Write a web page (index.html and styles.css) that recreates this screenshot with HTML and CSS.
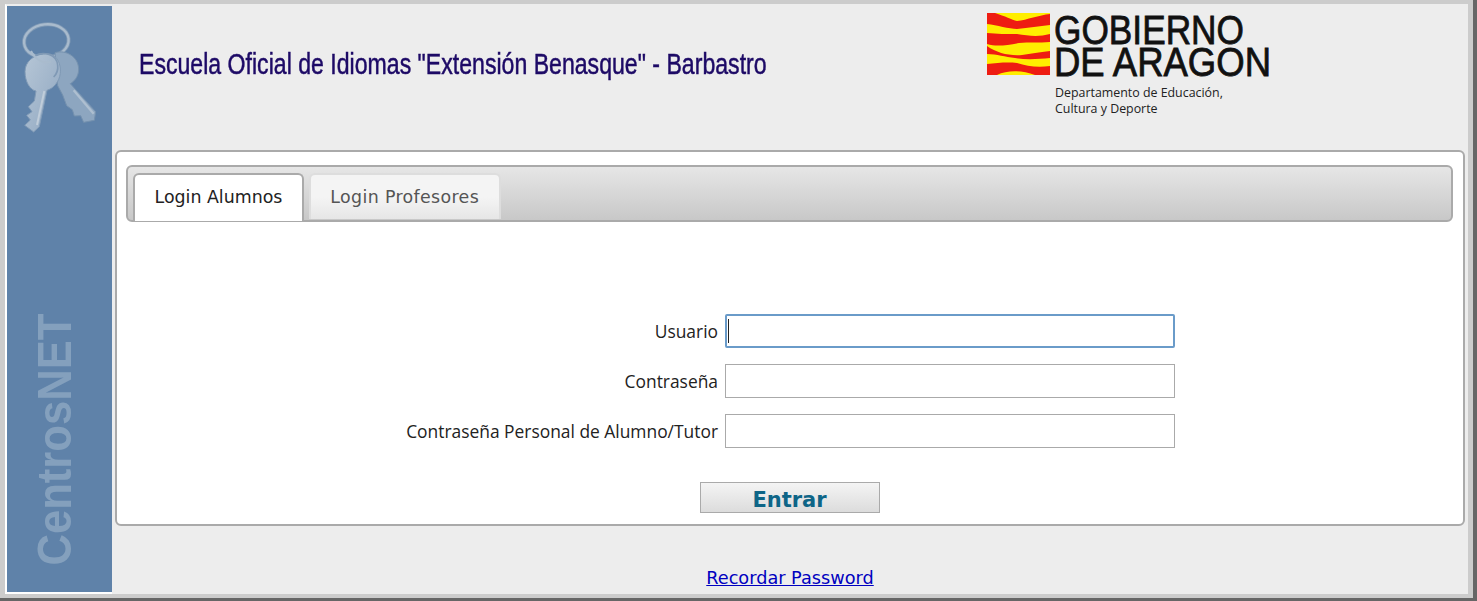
FILE: index.html
```html
<!DOCTYPE html>
<html lang="es">
<head>
    <meta charset="UTF-8">
    <title>CentrosNET</title>
    <link rel="stylesheet" href="styles.css">
</head>
<body>
    <div class="frame">
        <div class="sidebar">
            <svg class="keys" width="90" height="125" viewBox="0 0 270 375">
                <defs>
                    <linearGradient id="keyFront" x1="0" y1="0" x2="1" y2="1">
                        <stop offset="0" stop-color="#b6c6d6"/>
                        <stop offset="1" stop-color="#8fa7c1"/>
                    </linearGradient>
                </defs>
                <ellipse cx="94" cy="78" rx="67" ry="50" transform="rotate(-6 94 78)" fill="none" stroke="#7f99b5" stroke-width="12"/>
                <ellipse cx="94" cy="78" rx="67" ry="50" transform="rotate(-6 94 78)" fill="none" stroke="#a9bbcd" stroke-width="7"/>
                <path d="M120 113C152 103 192 125 191 165C190 185 178 199 166 206L242 290L238 316L206 322L197 302L178 303L172 284L155 272L143 240L128 212z" fill="#8da6c0" stroke="#7591ae" stroke-width="3"/>
                <path d="M176 226L236 296" fill="none" stroke="#aebfd0" stroke-width="7"/>
                <path d="M85 117C120 110 139 140 136 175C133 200 116 220 96 226L73 335L56 351L29 331L46 315L35 301L51 290L40 275L58 258L63 228C45 225 30 200 30 170C30 140 55 120 85 117z" fill="url(#keyFront)" stroke="#7f99b5" stroke-width="3"/>
                <path d="M88 228L66 330" fill="none" stroke="#c0cdda" stroke-width="6"/>
                <path d="M60 122C85 108 125 118 128 150C130 165 124 178 116 186" fill="none" stroke="#7f99b5" stroke-width="5"/>
                <path d="M48 108C60 132 85 148 108 140" fill="none" stroke="#a9bbcd" stroke-width="6"/>
            </svg>
            <div class="brand">CentrosNET</div>
        </div>
        <div class="main">
            <div class="header">
                <h1 class="title">Escuela Oficial de Idiomas "Extensión Benasque" - Barbastro</h1>
                <svg class="logo" width="290" height="106" viewBox="0 0 290 106">
                    <rect x="0" y="0" width="63" height="62" fill="#ee1c12"/>
                    <g fill="#ffee00">
                        <path d="M8 0C18 3 25 7 30 8C40 7 52 2 63 1V0z"/>
                        <path d="M0 11C10 12 22 16 30 16C42 15 52 13 63 12V21C52 24 42 23 30 21C20 21 10 21 0 20z"/>
                        <path d="M0 31C10 34 20 32 32 30C42 29 52 30 63 29V38C52 39 44 41 35 42C22 43 10 40 0 33z"/>
                        <path d="M0 41C10 41 18 44 28 45C40 47 52 46 63 45V53C50 55 40 53 30 50C20 49 10 50 0 51z"/>
                        <path d="M10 62C20 57 35 57 48 62z"/>
                    </g>
                    <text class="logo-big" x="67" y="31" textLength="190" lengthAdjust="spacingAndGlyphs">GOBIERNO</text>
                    <text class="logo-big" x="67" y="63" textLength="217" lengthAdjust="spacingAndGlyphs">DE ARAGON</text>
                    <text class="logo-small" x="68" y="84">Departamento de Educación,</text>
                    <text class="logo-small" x="68" y="100">Cultura y Deporte</text>
                </svg>
            </div>
            <div class="panel">
                <div class="tabbar">
                    <a class="tab tab-active">Login Alumnos</a>
                    <a class="tab tab-other">Login Profesores</a>
                </div>
                <form class="login">
                    <label for="usuario">Usuario</label>
                    <div class="field field-focus"><input id="usuario" type="text"></div>
                    <label for="clave">Contraseña</label>
                    <div class="field"><input id="clave" type="password"></div>
                    <label for="personal">Contraseña Personal de Alumno/Tutor</label>
                    <div class="field"><input id="personal" type="password"></div>
                    <button type="button" class="entrar">Entrar</button>
                </form>
            </div>
            <div class="footer"><a href="#">Recordar Password</a></div>
        </div>
    </div>
</body>
</html>
```
FILE: styles.css
```css
html, body {
    margin: 0;
    height: 100%;
    overflow: hidden;
    background: #666;
}

.frame {
    display: flex;
    box-sizing: border-box;
    width: 1473px;
    height: 598px;
    padding: 4px 5px 4px 5px;
    background: #ccc;
}

.sidebar {
    display: flex;
    flex-direction: column;
    justify-content: space-between;
    align-items: flex-start;
    box-sizing: border-box;
    width: 107px;
    padding: 9px 0 11px 8px;
    border-left: 2px solid #fff;
    border-top: 2px solid #ededed;
    border-bottom: 2px solid #fff;
    background: #5f82a9;
}

.keys {
    filter: blur(0.7px);
}

.brand {
    margin-left: 14px;
    writing-mode: vertical-rl;
    transform: rotate(180deg) scale(1, 0.89);
    font-family: "Liberation Sans", Arial, sans-serif;
    font-size: 49px;
    line-height: 50px;
    font-weight: bold;
    color: #84a0bd;
}

.main {
    flex: 1;
    display: flex;
    flex-direction: column;
    background: #ededed;
}

.header {
    display: flex;
    align-items: flex-start;
    height: 146px;
}

.title {
    flex: none;
    margin: 43px 0 0 27px;
    width: 848px;
    transform: scaleX(0.77);
    transform-origin: left center;
    font-family: "Liberation Sans", sans-serif;
    font-size: 30px;
    font-weight: normal;
    -webkit-text-stroke: 0.5px #1d0a66;
    white-space: nowrap;
    color: #1d0a66;
}

.logo {
    flex: none;
    margin-top: 9px;
    overflow: visible;
}

.logo-big {
    font-family: "Liberation Sans", Arial, sans-serif;
    font-size: 41px;
    fill: #111;
    stroke: #111;
    stroke-width: 0.8px;
}

.logo-small {
    font-family: "Open Sans", sans-serif;
    font-size: 12.4px;
    fill: #222;
}

.panel {
    box-sizing: border-box;
    height: 376px;
    margin: 0 3px 0 3px;
    padding: 13px 10px 0 9px;
    border: 2px solid #aaa;
    border-radius: 6px;
    background: #fff;
}

.tabbar {
    display: flex;
    align-items: flex-end;
    gap: 5px;
    box-sizing: border-box;
    height: 57px;
    padding-left: 5px;
    border: 2px solid #aaa;
    border-radius: 6px;
    background: linear-gradient(#e6e6e6, #c8c8c8);
}

.tab {
    display: flex;
    align-items: center;
    box-sizing: border-box;
    height: 48px;
    padding: 0 19.5px 3px;
    margin-bottom: -1px;
    border: 2px solid #aaa;
    border-bottom: none;
    border-radius: 6px 6px 0 0;
    background: #fff;
    font-family: "DejaVu Sans", Verdana, sans-serif;
    font-size: 17.4px;
    color: #222;
}

.tab-other {
    height: 46px;
    margin-bottom: 1px;
    padding-bottom: 0;
    border-color: #ddd;
    background: linear-gradient(#f4f4f4 50%, #e6e6e6);
    letter-spacing: 0.35px;
    color: #555;
}

.login {
    display: grid;
    grid-template-columns: 1fr 450px;
    column-gap: 7px;
    row-gap: 16px;
    align-items: center;
    margin-top: 92px;
    padding-right: 278px;
    font-family: "Open Sans", sans-serif;
    font-size: 17.4px;
    color: #222;
}

.login label {
    text-align: right;
    white-space: nowrap;
}

.field {
    position: relative;
    display: flex;
}

.field input {
    box-sizing: border-box;
    width: 100%;
    height: 34px;
    padding: 0 2px;
    border: 1px solid #aaa;
    outline: none;
    background: #fff;
}

.field-focus input {
    border: 2px solid #6a9bc9;
    border-radius: 2px;
}

/* text caret of the focused field */
.field-focus::after {
    content: "";
    position: absolute;
    left: 3px;
    top: 5px;
    width: 1px;
    height: 24px;
    background: #222;
}

.entrar {
    grid-column: 1 / 3;
    justify-self: center;
    width: 180px;
    height: 31px;
    margin: 18px 0 0 278px;
    padding: 4px 0 0;
    border: 1px solid #aaa;
    background: linear-gradient(#f4f4f4, #dcdcdc);
    font-family: "DejaVu Sans", Verdana, sans-serif;
    font-size: 21px;
    font-weight: bold;
    color: #0e6587;
}

.footer {
    margin-top: 42px;
    text-align: center;
    font-family: "DejaVu Sans", Verdana, sans-serif;
    font-size: 17.7px;
}

.footer a {
    color: #0000c0;
}
```
